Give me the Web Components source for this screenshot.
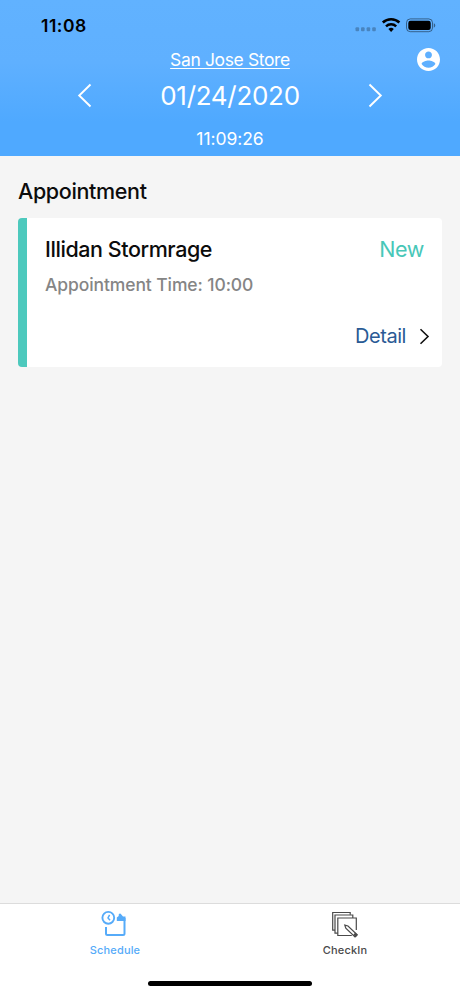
<!DOCTYPE html>
<html lang="en">
<head>
    <meta charset="UTF-8">
    <title>Schedule</title>
    <style>
        html, body {
            margin: 0;
            height: 100%;
        }
        body {
            font-family: Inter, "Liberation Sans", sans-serif;
            background: #f5f5f5;
            overflow: hidden;
        }
    </style>
</head>
<body>
<app-screen>
    <store-header slot="header" store="San Jose Store" date="01/24/2020" time="11:09:26">
        <status-bar time="11:08"></status-bar>
    </store-header>
    <appointment-card time="10:00" status="New">Illidan Stormrage</appointment-card>
    <tab-bar slot="footer">
        <tab-item icon="schedule" active>Schedule</tab-item>
        <tab-item icon="checkin">CheckIn</tab-item>
    </tab-bar>
</app-screen>
</body>
<script>
    // every element renders its markup into an open shadow root
    class BaseElement extends HTMLElement {
      constructor() {
        super()
        this.attachShadow({mode: 'open'})
      }
      connectedCallback() {
        this.shadowRoot.innerHTML = this.render()
      }
    }

    class AppScreen extends BaseElement {
      render() {
        return `
          <style>
            :host { display: flex; flex-direction: column; height: 996px; }
            main { flex: 1; padding: 21px 18px 0; }
            h2 { margin: 0 0 13px; font-size: 21.5px; line-height: 28px; font-weight: 500; letter-spacing: -.35px; color: #0c0c0c; }
          </style>
          <slot name="header"></slot>
          <main>
            <h2>Appointment</h2>
            <slot></slot>
          </main>
          <slot name="footer"></slot>`
      }
    }

    class StatusBar extends BaseElement {
      render() {
        return `
          <style>
            :host { display: flex; align-items: center; height: 47px; padding: 3px 24px 0 41px; box-sizing: border-box; color: #000; }
            span { flex: 1; font-size: 17.5px; font-weight: 600; letter-spacing: .5px; }
            svg { display: block; }
          </style>
          <span>${this.getAttribute('time')}</span>
          <svg width="81" height="18" viewBox="0 0 81 18">
            <g fill="#000" fill-opacity=".25">
              <rect x=".5" y="11.2" width="3.6" height="4" rx="1"/>
              <rect x="6" y="11.2" width="3.6" height="4" rx="1"/>
              <rect x="11.6" y="11.2" width="3.6" height="4" rx="1"/>
              <rect x="17.2" y="11.2" width="3.6" height="4" rx="1"/>
            </g>
            <g fill="none" stroke="#000" stroke-width="2.5">
              <path d="M27.800 6.500a12 12 0 0 1 16.600 0"/>
              <path d="M31 10.300a7.400 7.400 0 0 1 10.200 0"/>
            </g>
            <path d="M33.400 13a4 4 0 0 1 5.400 0l-2.700 2.900z"/>
            <rect x="51.500" y="2.900" width="26" height="12.800" rx="3.800" fill="none" stroke="#000" stroke-opacity=".45"/>
            <rect x="53.300" y="4.700" width="22.400" height="9.200" rx="2.200"/>
            <path d="M78.800 7.300v4.400q1.500-.6 1.500-2.200t-1.500-2.200z" fill-opacity=".45"/>
          </svg>`
      }
    }

    class StoreHeader extends BaseElement {
      render() {
        return `
          <style>
            :host { display: block; height: 156px; color: #fff; background: linear-gradient(#61b2ff 0, #5fb0ff 40%, #4fa9ff 78%, #4fa9ff 100%); }
            .row { display: grid; align-items: center; }
            .store { grid-template-columns: 1fr auto 1fr; height: 25px; }
            .store a { grid-column: 2; font-size: 17.5px; letter-spacing: -.37px; text-decoration: underline; text-decoration-thickness: 1px; text-underline-offset: 2px; text-decoration-skip-ink: none; }
            .store svg { justify-self: end; margin-right: 20px; }
            .date { grid-template-columns: 92px 1fr 92px; height: 47px; text-align: center; font-size: 26px; letter-spacing: -.3px; }
            .date svg:first-child { justify-self: end; }
            .clock { padding-top: 9px; text-align: center; font-size: 17.5px; line-height: 22px; letter-spacing: -.05px; }
            svg { display: block; }
          </style>
          <slot></slot>
          <div class="row store">
            <a>${this.getAttribute('store')}</a>
            <svg width="23" height="23" viewBox="2 2 20 20" fill="#fff">
              <path d="M12 2C6.48 2 2 6.48 2 12s4.480 10 10 10 10-4.480 10-10S17.520 2 12 2zm0 3c1.660 0 3 1.340 3 3s-1.340 3-3 3-3-1.340-3-3 1.340-3 3-3zm0 14.200c-2.500 0-4.710-1.280-6-3.220.03-1.990 4-3.080 6-3.080 1.990 0 5.970 1.090 6 3.080-1.290 1.940-3.500 3.220-6 3.220z"/>
            </svg>
          </div>
          <div class="row date">
            <svg width="15" height="25" viewBox="0 0 15 25" fill="none" stroke="#fff" stroke-width="1.9"><path d="M13.500 1.500 2.200 12.500l11.300 11"/></svg>
            <span>${this.getAttribute('date')}</span>
            <svg width="15" height="25" viewBox="0 0 15 25" fill="none" stroke="#fff" stroke-width="1.9"><path d="M1.500 1.500l11.300 11-11.300 11"/></svg>
          </div>
          <div class="clock">${this.getAttribute('time')}</div>`
      }
    }

    class AppointmentCard extends BaseElement {
      render() {
        return `
          <style>
            :host { display: flex; flex-direction: column; height: 149px; box-sizing: border-box; padding: 16px 12px 16px 18px; border-left: 9px solid #4dc9bd; border-radius: 4px; background: #fff; }
            .top { display: flex; justify-content: space-between; padding-right: 6px; font-size: 21.5px; line-height: 30px; letter-spacing: -.43px; }
            .name { font-weight: 500; color: #0c0c0c; }
            .status { color: #48c7b8; }
            .time { flex: 1; padding-top: 9px; font-size: 17.5px; line-height: 24px; font-weight: 500; letter-spacing: -.1px; color: #858585; }
            .detail { display: flex; align-items: center; justify-content: flex-end; gap: 13px; font-size: 20px; line-height: 30px; letter-spacing: -.45px; color: #2a5a95; }
          </style>
          <div class="top">
            <span class="name"><slot></slot></span>
            <span class="status">${this.getAttribute('status')}</span>
          </div>
          <div class="time">Appointment Time: ${this.getAttribute('time')}</div>
          <div class="detail">
            <span>Detail</span>
            <svg width="11" height="17" viewBox="0 0 11 17" fill="none" stroke="#111" stroke-width="1.6"><path d="M1.500 1.200l7.500 7.300-7.500 7.300"/></svg>
          </div>`
      }
    }

    class TabBar extends BaseElement {
      render() {
        return `
          <style>
            :host { display: flex; flex-direction: column; height: 93px; box-sizing: border-box; border-top: 1px solid #dcdcdc; background: #fff; }
            nav { flex: 1; display: grid; grid-template-columns: 1fr 1fr; }
            /* home indicator */
            i { align-self: center; width: 164px; height: 5px; margin-bottom: 10px; border-radius: 3px; background: #000; }
          </style>
          <nav><slot></slot></nav>
          <i></i>`
      }
    }

    const icons = {
      schedule: `
        <g fill="none" stroke="currentColor">
          <circle cx="7.300" cy="7.800" r="5.900" stroke-width="1.900"/>
          <path d="M8.600 4.800 7 7.900l2 2.400" stroke-width="1.500"/>
          <path d="M5 17v6.400q0 1.500 1.500 1.500H22q1.500 0 1.500-1.500V8" stroke-width="2"/>
        </g>
        <path d="M15.800 11V7.500L17.700 6V4.500q1.300-2.200 2.600 0L22 6.500h2.500V11z" fill="currentColor"/>`,
      checkin: `
        <g fill="none" stroke="currentColor" stroke-width="1.200">
          <path d="M4 20.200H1.700V2.500h17.500v2.300"/>
          <path d="M6.800 23.200H4V5h17.800v3"/>
          <path d="M25.300 20V8H6.800v17.500h14"/>
          <path d="M13.800 15.200l3.200.8 9.200 8.700-2.200 2.300-9.200-8.800z" fill="#fff"/>
          <path d="M23.200 24.800l1.500 1.500 1.100-1.300-1.500-1.500z" fill="currentColor"/>
        </g>`
    }

    class TabItem extends BaseElement {
      render() {
        return `
          <style>
            :host { display: flex; flex-direction: column; align-items: center; padding-top: 6px; font-size: 11px; line-height: 14px; font-weight: 500; letter-spacing: .15px; color: #4a4a4a; }
            :host([active]) { color: #56abf9; }
            svg { display: block; margin-bottom: 5px; }
          </style>
          <svg width="28" height="28" viewBox="0 0 28 28">${icons[this.getAttribute('icon')]}</svg>
          <span><slot></slot></span>`
      }
    }

    customElements.define('app-screen', AppScreen)
    customElements.define('status-bar', StatusBar)
    customElements.define('store-header', StoreHeader)
    customElements.define('appointment-card', AppointmentCard)
    customElements.define('tab-bar', TabBar)
    customElements.define('tab-item', TabItem)
</script>
</html>
